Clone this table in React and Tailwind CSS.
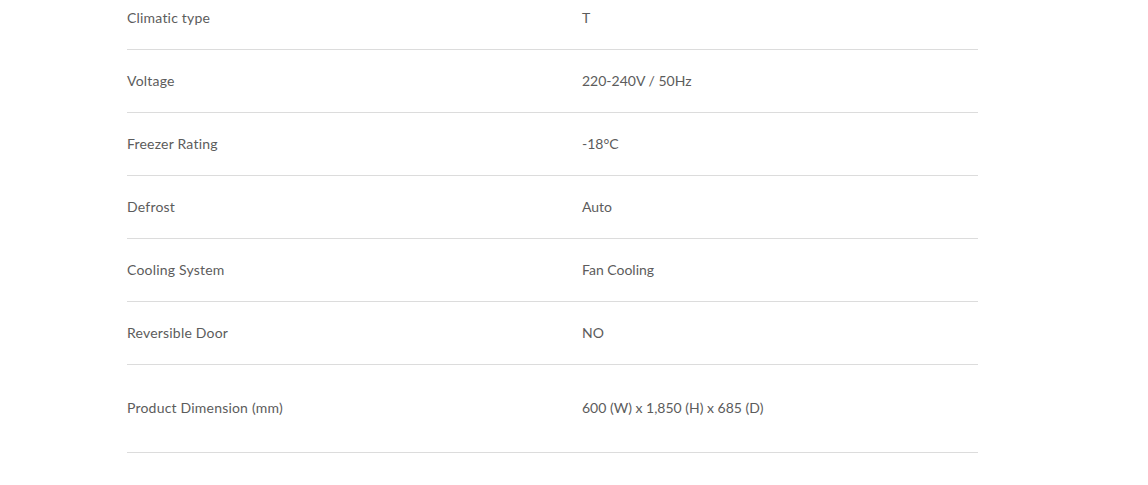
import React from 'react';

const specs = [
  ['Climatic type', 'T'],
  ['Voltage', '220-240V / 50Hz'],
  ['Freezer Rating', '-18°C'],
  ['Defrost', 'Auto'],
  ['Cooling System', 'Fan Cooling'],
  ['Reversible Door', 'NO'],
];

const SpecRow = ({ label, value, tall }) => (
  <div
    className={`flex items-center pb-[2px] border-b border-[#dcdcdc] ${tall ? 'h-[88px]' : 'h-[63px]'}`}
  >
    <div className="w-[455px] shrink-0 tracking-[0.2px]">{label}</div>
    <div className="flex-1">{value}</div>
  </div>
);

export default function App() {
  return (
    <div className="w-[1148px] h-[485px] overflow-hidden bg-white">
      <div
        className="ml-[127px] w-[851px] -mt-[13px] text-[14px] text-[#5c5c5c]"
        style={{ fontFamily: 'Lato, "Liberation Sans", sans-serif' }}
      >
        {specs.map(([label, value]) => (
          <SpecRow key={label} label={label} value={value} />
        ))}
        <SpecRow label="Product Dimension (mm)" value="600 (W) x 1,850 (H) x 685 (D)" tall />
      </div>
    </div>
  );
}
